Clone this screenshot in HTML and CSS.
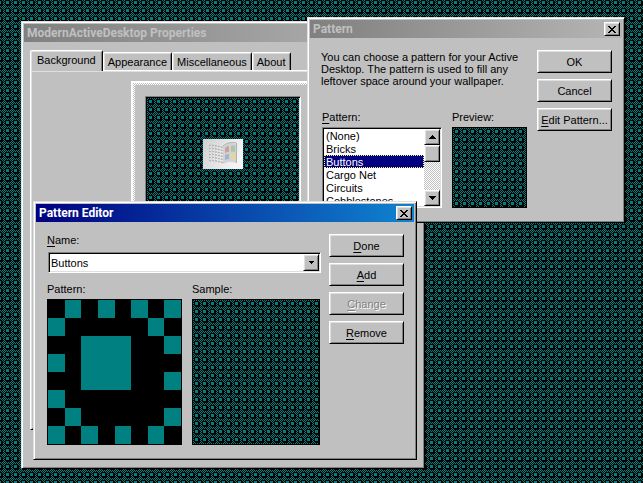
FILE: index.html
```
<!DOCTYPE html>
<html lang="en">
<head>
<meta charset="utf-8">
<title>Desktop</title>
<link rel="stylesheet" href="styles.css">
</head>
<body>
<main class="desktop">

  <section class="window window-properties" aria-label="ModernActiveDesktop Properties">
    <header class="titlebar inactive"><h2>ModernActiveDesktop Properties</h2></header>
    <div class="properties-body">
      <div class="tabs" role="tablist">
        <button class="tab active" role="tab" aria-selected="true">Background</button>
        <button class="tab" role="tab">Appearance</button>
        <button class="tab" role="tab">Miscellaneous</button>
        <button class="tab" role="tab">About</button>
      </div>
      <div class="tab-panel" role="tabpanel">
        <div class="dither-frame">
          <div class="screen tiled">
            <svg class="logo" viewBox="0 0 40 30" aria-hidden="true">
              <defs>
                <linearGradient id="paper" x1="0" y1="0" x2="1" y2="0.4">
                  <stop offset="0" stop-color="#cfcfcf"/><stop offset="0.6" stop-color="#e6e6e6"/><stop offset="1" stop-color="#f4f4f4"/>
                </linearGradient>
              </defs>
              <path fill="url(#paper)" d="M0 0h40v30H0z"/>
              <path fill="none" stroke="#b4b4b4" stroke-width="1.5" stroke-dasharray="2 1" d="M6 6.5h5l9 2M6 9.5h5l9 2M6 12.5h5l9 2M6 15.5h5l9 2M6 18.5h5l9 2M6 21.5h5l9 2"/>
              <path fill="none" stroke="#f4f4f4" stroke-width="1" stroke-dasharray="1 2" d="M7 8h5l8 2M7 11h5l8 2M7 14h5l8 2M7 17h5l8 2M7 20h5l8 2"/>
              <path fill="#d2d2d2" d="M20 7q6-5 13-2v19q-7-3-13 1z"/>
              <path fill="#c9a29b" d="M22 9q2-2 4-2v6q-2 0-4 1z"/>
              <path fill="#a9c7a8" d="M28 7q2-1 4 0v6q-2-1-4 0z"/>
              <path fill="#9fb4cf" d="M22 16q2-1 4-1v5q-2 0-4 1z"/>
              <path fill="#e6d98c" d="M28 15q2-1 4 0v5q-2-1-4 0z"/>
              <path fill="none" stroke="#b0b0b0" d="M20 7q6-5 13.500-3v20"/>
            </svg>
          </div>
        </div>
      </div>
    </div>
  </section>

  <section class="window window-pattern" aria-label="Pattern">
    <header class="titlebar inactive">
      <h2>Pattern</h2>
      <button class="close" aria-label="Close"><svg viewBox="0 0 8 7"><path d="M0 0h2v1h1v1h2v-1h1v-1h2v1h-1v1h-1v1h-1v1h1v1h1v1h1v1h-2v-1h-1v-1h-2v1h-1v1h-2v-1h1v-1h1v-1h1v-1h-1v-1h-1v-1h-1z"/></svg></button>
    </header>
    <div class="dialog-body">
      <div class="dialog-main pattern-main">
        <p class="hint">You can choose a pattern for your Active<br>Desktop. The pattern is used to fill any<br>leftover space around your wallpaper.</p>
        <div class="pattern-row">
          <div class="field">
            <label for="pattern-list"><u>P</u>attern:</label>
            <div class="listbox">
              <select id="pattern-list" size="7">
                <option>(None)</option>
                <option>Bricks</option>
                <option selected>Buttons</option>
                <option>Cargo Net</option>
                <option>Circuits</option>
                <option>Cobblestones</option>
                <option>Colosseum</option>
              </select>
              <div class="scrollbar">
                <button class="scroll-button" aria-label="Scroll up"><svg viewBox="0 0 7 4"><path d="M3 0h1v1h1v1h1v1h1v1H0V3h1V2h1V1h1z"/></svg></button>
                <span class="thumb"></span>
                <span class="track"></span>
                <button class="scroll-button" aria-label="Scroll down"><svg viewBox="0 0 7 4"><path d="M0 0h7v1H6v1H5v1H4v1H3V3H2V2H1V1H0z"/></svg></button>
              </div>
            </div>
          </div>
          <div class="field preview-field">
            <span class="caption">Preview:</span>
            <div class="swatch tiled"></div>
          </div>
        </div>
      </div>
      <div class="actions">
        <button class="button">OK</button>
        <button class="button">Cancel</button>
        <button class="button"><span><u>E</u>dit Pattern...</span></button>
      </div>
    </div>
  </section>

  <section class="window window-editor" aria-label="Pattern Editor">
    <header class="titlebar">
      <h2>Pattern Editor</h2>
      <button class="close" aria-label="Close"><svg viewBox="0 0 8 7"><path d="M0 0h2v1h1v1h2v-1h1v-1h2v1h-1v1h-1v1h-1v1h1v1h1v1h1v1h-2v-1h-1v-1h-2v1h-1v1h-2v-1h1v-1h1v-1h1v-1h-1v-1h-1v-1h-1z"/></svg></button>
    </header>
    <div class="dialog-body">
      <div class="dialog-main">
        <label for="pattern-name"><u>N</u>ame:</label>
        <div class="combo">
          <select id="pattern-name"><option>Buttons</option></select>
          <span class="combo-arrow"><svg viewBox="0 0 5 3"><path d="M0 0h5v1H4v1H3v1H2V2H1V1H0z"/></svg></span>
        </div>
        <div class="editor-row">
          <div class="field pixel-field">
            <span class="caption">Pattern:</span>
            <svg class="pixels" viewBox="0 0 8 8" preserveAspectRatio="none" role="img" aria-label="Pattern pixels">
              <path d="M1 0h1v1h-1zM3 0h1v1h-1zM5 0h1v1h-1zM7 0h1v1h-1zM0 1h1v1h-1zM6 1h1v1h-1zM2 2h3v3h-3zM7 2h1v1h-1zM0 3h1v1h-1zM7 4h1v1h-1zM0 5h1v1h-1zM1 6h1v1h-1zM7 6h1v1h-1zM0 7h1v1h-1zM2 7h1v1h-1zM4 7h1v1h-1zM6 7h1v1h-1z"/>
            </svg>
          </div>
          <div class="field sample-field">
            <span class="caption">Sample:</span>
            <div class="swatch tiled"></div>
          </div>
        </div>
      </div>
      <div class="actions">
        <button class="button"><span><u>D</u>one</span></button>
        <button class="button"><span><u>A</u>dd</span></button>
        <button class="button" disabled><span><u>C</u>hange</span></button>
        <button class="button"><span><u>R</u>emove</span></button>
      </div>
    </div>
  </section>

</main>
</body>
</html>
```
FILE: styles.css
```
:root {
  --face: #c0c0c0;
  --light: #dfdfdf;
  --shadow: #808080;
  --teal: #008080;
  --tile: url("data:image/svg+xml,%3Csvg xmlns='http://www.w3.org/2000/svg' width='8' height='8' shape-rendering='crispEdges'%3E%3Cpath d='M0 0h8v8H0z'/%3E%3Cpath fill='%23008080' d='M1 0h1v1h-1zM3 0h1v1h-1zM5 0h1v1h-1zM7 0h1v1h-1zM0 1h1v1h-1zM6 1h1v1h-1zM2 2h3v3h-3zM7 2h1v1h-1zM0 3h1v1h-1zM7 4h1v1h-1zM0 5h1v1h-1zM1 6h1v1h-1zM7 6h1v1h-1zM0 7h1v1h-1zM2 7h1v1h-1zM4 7h1v1h-1zM6 7h1v1h-1z'/%3E%3C/svg%3E");
}

* {
  box-sizing: border-box;
}

body {
  margin: 0;
  font: 11px/12px "Liberation Sans", Arial, sans-serif;
  color: #000;
}

button,
select {
  margin: 0;
  padding: 0;
  border: 0;
  border-radius: 0;
  outline: 0;
  font: inherit;
  color: inherit;
  appearance: none;
}

svg {
  display: block;
  shape-rendering: crispEdges;
}

u {
  text-decoration: underline;
  text-decoration-thickness: 1px;
  text-underline-offset: 2px;
}

.tiled {
  background-image: var(--tile);
}

.desktop {
  position: relative;
  height: 100vh;
  overflow: hidden;
  background: var(--tile) 4px 7px;
}

/* Windows */

.window {
  position: absolute;
  padding: 2px;
  border: 1px solid;
  border-color: var(--light) #000 #000 var(--light);
  background: var(--face);
  box-shadow: inset 1px 1px #fff, inset -1px -1px var(--shadow);
}

.window-properties {
  left: 21px;
  top: 21px;
  width: 404px;
}

.window-pattern {
  left: 307px;
  top: 17px;
  width: 318px;
}

.window-editor {
  left: 33px;
  top: 201px;
  width: 384px;
}

.titlebar {
  display: flex;
  align-items: center;
  justify-content: space-between;
  height: 18px;
  padding: 0 2px 0 3px;
  background: linear-gradient(90deg, #000080, #1084d0);
  color: #fff;
}

.titlebar.inactive {
  background: linear-gradient(90deg, #808080, #b5b5b5);
  color: var(--face);
}

.titlebar h2 {
  margin: 0;
  font-family: Roboto, "Liberation Sans", sans-serif;
  font-size: 12px;
  line-height: 18px;
}

.close,
.button,
.scroll-button,
.thumb,
.combo-arrow {
  display: flex;
  align-items: center;
  justify-content: center;
  border: 1px solid;
  border-color: #fff #000 #000 #fff;
  background: var(--face);
  box-shadow: inset 1px 1px var(--light), inset -1px -1px var(--shadow);
}

.close {
  width: 16px;
  height: 14px;
}

.close svg {
  width: 8px;
  height: 7px;
}

/* Properties */

.properties-body {
  padding: 8px 6px 36px;
}

.tabs {
  display: flex;
  align-items: flex-end;
  height: 20px;
}

.tab {
  height: 18px;
  padding: 1px 4px 0;
  border: 1px solid;
  border-color: #fff #000 transparent #fff;
  border-bottom: 0;
  border-radius: 2px 2px 0 0;
  background: var(--face);
  box-shadow: inset 1px 1px var(--light), inset -1px 0 var(--shadow);
}

.tab.active {
  z-index: 1;
  height: 21px;
  margin-bottom: -1px;
  padding: 0 6px 2px;
}

.tab-panel {
  height: 360px;
  padding: 10px 6px 0 100px;
  border: 1px solid;
  border-color: #fff #000 #000 #fff;
  box-shadow: inset 1px 1px var(--light), inset -1px -1px var(--shadow);
}

.dither-frame {
  height: 320px;
  padding: 11px 10px;
  border: 4px solid transparent;
  background:
    linear-gradient(var(--face), var(--face)) padding-box,
    repeating-conic-gradient(#fff 0 25%, var(--face) 0 50%) 0 0 / 2px 2px border-box;
  outline: 2px solid #fff;
  outline-offset: -2px;
}

.screen {
  display: flex;
  align-items: center;
  justify-content: center;
  width: 156px;
  height: 116px;
  border: 1px solid;
  border-color: var(--shadow) #fff #fff var(--shadow);
  background-position: 1px 1px;
  box-shadow: inset 1px 1px #000, inset -1px 0 var(--light);
}

.logo {
  width: 40px;
  height: 30px;
  shape-rendering: auto;
}

/* Dialogs */

.dialog-body {
  display: flex;
  gap: 8px;
  padding: 12px 10px 12px 11px;
}

.dialog-main {
  flex: 1;
  min-width: 0;
}

.dialog-main label,
.caption {
  display: block;
  height: 16px;
}

.actions {
  display: flex;
  flex-direction: column;
  gap: 6px;
  width: 75px;
}

.button {
  height: 23px;
  white-space: nowrap;
}

.button:disabled {
  color: var(--shadow);
  text-shadow: 1px 1px #fff;
}

.hint {
  margin: 1px 0 24px;
  white-space: nowrap;
}

.pattern-row {
  display: flex;
  gap: 10px;
  padding-left: 1px;
}

.listbox {
  display: flex;
  width: 120px;
  height: 81px;
  padding: 1px;
  border: 1px solid;
  border-color: var(--shadow) #fff #fff var(--shadow);
  background: #fff;
  box-shadow: inset 1px 1px #000, inset -1px -1px var(--light);
}

.listbox select {
  flex: 1;
  min-width: 0;
  height: 77px;
  overflow: hidden;
  background: #fff;
}

.listbox option {
  height: 13px;
  min-height: 13px;
  padding: 1px 2px 0;
  line-height: 12px;
}

.listbox option:checked {
  background: linear-gradient(#000080, #000080);
  color: #fff;
  outline: 1px dotted #ffff7f;
  outline-offset: -1px;
}

.scrollbar {
  display: flex;
  flex-direction: column;
  width: 16px;
}

.scroll-button {
  height: 16px;
}

.scroll-button svg {
  width: 7px;
  height: 4px;
}

.thumb {
  height: 17px;
}

.track {
  flex: 1;
  background: repeating-conic-gradient(#fff 0 25%, var(--face) 0 50%) 0 0 / 2px 2px;
}

.swatch {
  border: 1px solid #000;
}

.preview-field .swatch {
  width: 75px;
  height: 81px;
}

.combo {
  display: flex;
  height: 21px;
  margin: 2px 0 10px 1px;
  padding: 1px;
  border: 1px solid;
  border-color: var(--shadow) #fff #fff var(--shadow);
  background: #fff;
  box-shadow: inset 1px 1px #000, inset -1px -1px var(--light);
}

.combo select {
  flex: 1;
  padding-left: 1px;
  background: transparent;
}

.combo-arrow {
  width: 16px;
}

.combo-arrow svg {
  width: 5px;
  height: 3px;
}

.editor-row {
  display: flex;
  gap: 10px;
}

.pixels {
  width: 135px;
  height: 146px;
  border: 1px solid #000;
  background: #000;
  fill: var(--teal);
}

.sample-field .swatch {
  width: 128px;
  height: 146px;
}
```
